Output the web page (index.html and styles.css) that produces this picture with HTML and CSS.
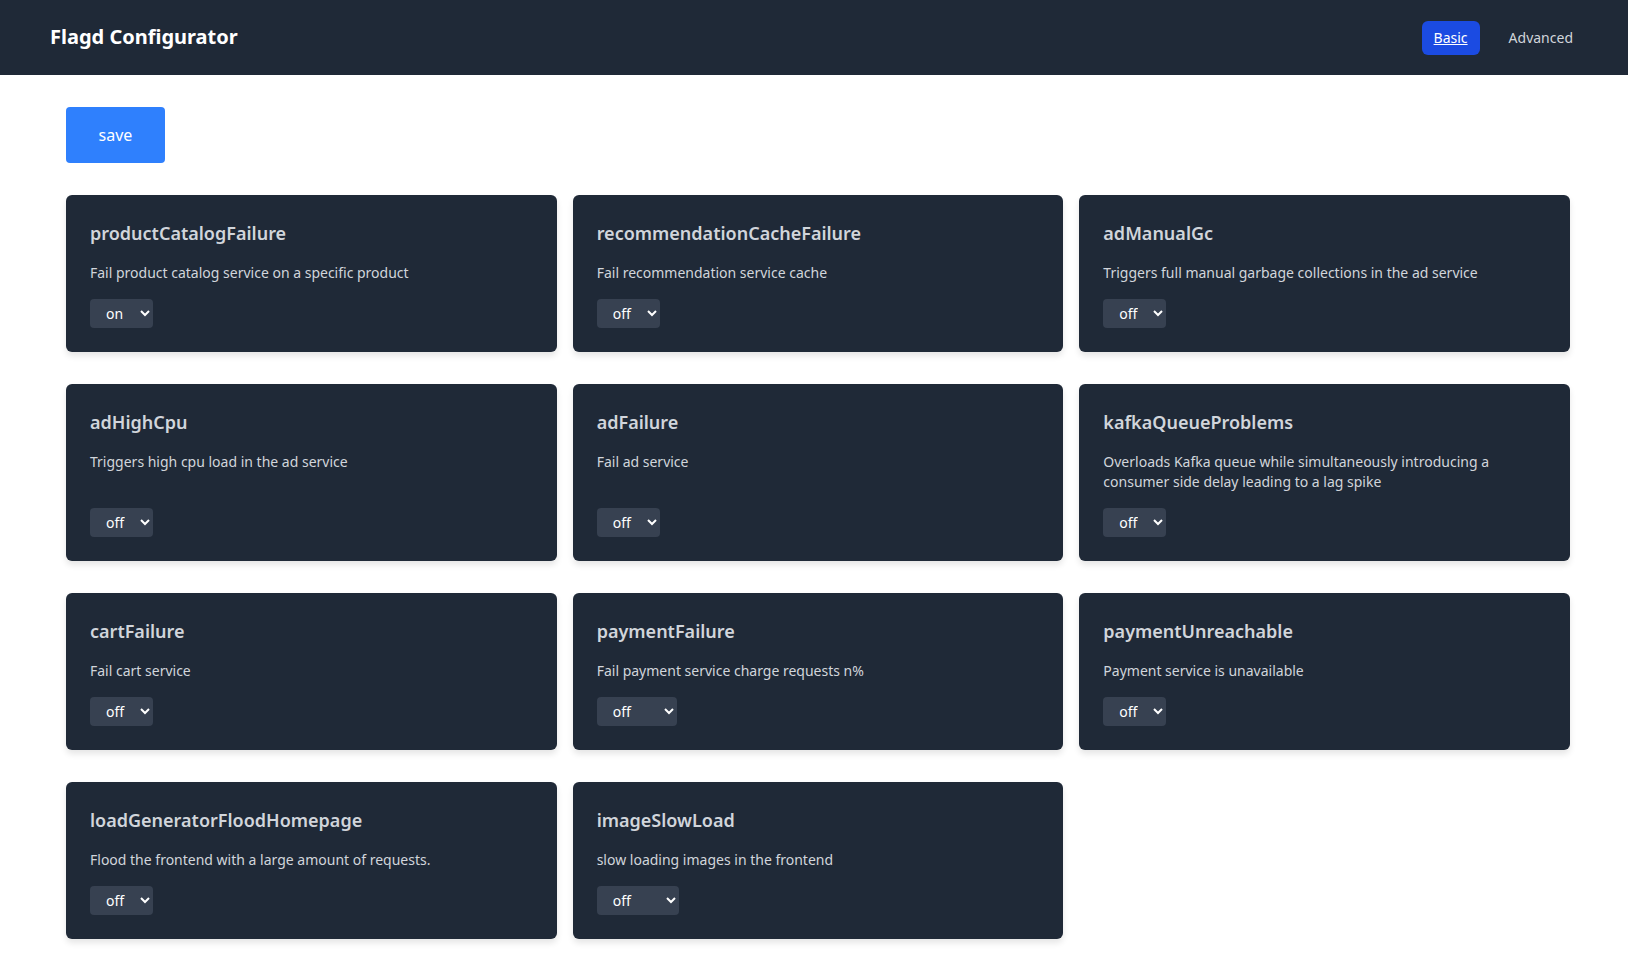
FILE: index.html
```html
<!DOCTYPE html>
<html lang="en">
<head>
  <meta charset="UTF-8" />
  <meta name="viewport" content="width=device-width, initial-scale=1.0" />
  <title>Flagd Configurator</title>
  <link rel="stylesheet" href="styles.css">
</head>
<body>
  <header class="topbar">
    <div class="brand">Flagd Configurator</div>
    <nav class="nav">
      <a href="#" class="nav-link active">Basic</a>
      <a href="#" class="nav-link">Advanced</a>
    </nav>
  </header>

  <main class="content">
    <button class="save-btn">save</button>

    <div class="flag-grid">
      <div class="flag-card">
        <h2>productCatalogFailure</h2>
        <p>Fail product catalog service on a specific product</p>
        <select><option selected>on</option><option>off</option></select>
      </div>
      <div class="flag-card">
        <h2>recommendationCacheFailure</h2>
        <p>Fail recommendation service cache</p>
        <select><option>on</option><option selected>off</option></select>
      </div>
      <div class="flag-card">
        <h2>adManualGc</h2>
        <p>Triggers full manual garbage collections in the ad service</p>
        <select><option>on</option><option selected>off</option></select>
      </div>

      <div class="flag-card">
        <h2>adHighCpu</h2>
        <p>Triggers high cpu load in the ad service</p>
        <select><option>on</option><option selected>off</option></select>
      </div>
      <div class="flag-card">
        <h2>adFailure</h2>
        <p>Fail ad service</p>
        <select><option>on</option><option selected>off</option></select>
      </div>
      <div class="flag-card">
        <h2>kafkaQueueProblems</h2>
        <p>Overloads Kafka queue while simultaneously introducing a consumer side delay leading to a lag spike</p>
        <select><option>on</option><option selected>off</option></select>
      </div>

      <div class="flag-card">
        <h2>cartFailure</h2>
        <p>Fail cart service</p>
        <select><option>on</option><option selected>off</option></select>
      </div>
      <div class="flag-card">
        <h2>paymentFailure</h2>
        <p>Fail payment service charge requests n%</p>
        <select>
          <option>100%</option><option>90%</option><option>75%</option>
          <option>50%</option><option>25%</option><option>10%</option>
          <option selected>off</option>
        </select>
      </div>
      <div class="flag-card">
        <h2>paymentUnreachable</h2>
        <p>Payment service is unavailable</p>
        <select><option>on</option><option selected>off</option></select>
      </div>

      <div class="flag-card">
        <h2>loadGeneratorFloodHomepage</h2>
        <p>Flood the frontend with a large amount of requests.</p>
        <select><option>on</option><option selected>off</option></select>
      </div>
      <div class="flag-card">
        <h2>imageSlowLoad</h2>
        <p>slow loading images in the frontend</p>
        <select>
          <option>10sec</option><option>5sec</option>
          <option selected>off</option>
        </select>
      </div>
    </div>
  </main>
</body>
</html>
```

FILE: styles.css
```css
body {
  margin: 0;
  font-family: "Noto Sans", "Open Sans", sans-serif;
  background-color: #fff;
  color: #d1d5db;
}

.topbar {
  background-color: #1f2937;
  height: 75px;
  display: flex;
  align-items: center;
  justify-content: space-between;
  padding: 0 43px 0 50px;
}

.brand {
  color: #fff;
  font-size: 20px;
  font-weight: bold;
  margin-top: -2px;
}

.nav {
  display: flex;
  align-items: center;
  gap: 17px;
}

.nav-link {
  font-size: 14px;
  line-height: 20px;
  padding: 7px 12px;
  border-radius: 6px;
  color: #d1d5db;
  text-decoration: none;
}

.nav-link.active {
  background-color: #1b4be2;
  color: #fff;
  text-decoration: underline;
}

.content {
  padding: 32px 58px 32px 66px;
}

.save-btn {
  font-family: inherit;
  font-size: 16px;
  line-height: 24px;
  padding: 16px 32px;
  width: 99px;
  background-color: #2f80fd;
  color: #fff;
  border: none;
  border-radius: 4px;
  cursor: pointer;
}

.flag-grid {
  margin-top: 32px;
  display: grid;
  grid-template-columns: repeat(3, 1fr);
  column-gap: 16px;
  row-gap: 32px;
}

.flag-card {
  background-color: #1f2937;
  border-radius: 6px;
  padding: 24px;
  box-shadow: 0 4px 6px rgba(0, 0, 0, 0.1);
  display: flex;
  flex-direction: column;
  align-items: flex-start;
}

.flag-card h2 {
  margin: 0 0 16px;
  font-size: 18px;
  line-height: 28px;
  font-weight: 600;
}

.flag-card p {
  margin: 0 0 16px;
  font-size: 14px;
  line-height: 20px;
  flex-grow: 1;
}

.flag-card select {
  font-family: inherit;
  font-size: 14px;
  line-height: 20px;
  height: 29px;
  padding: 0 12px 0 12px;
  background-color: #374151;
  color: #fff;
  border: none;
  border-radius: 4px;
}
```
